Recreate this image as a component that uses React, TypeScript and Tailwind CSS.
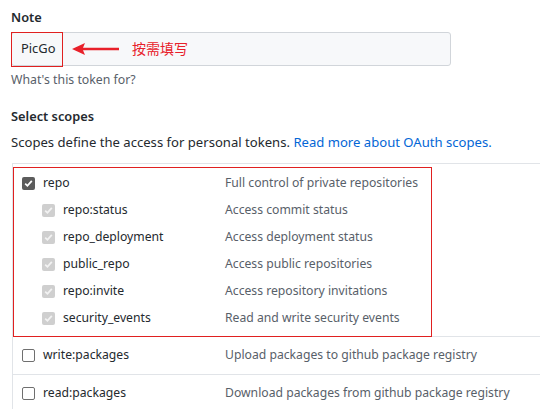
import React from "react";

const font = { fontFamily: '"Segoe UI", "Noto Sans", "Noto Sans CJK SC", sans-serif' };

function Box({ kind }: { kind: "checked" | "sub" | "empty" }) {
  if (kind === "empty") {
    return <span className="block w-[13px] h-[13px] rounded-[2px] border border-[#6f6f6f] bg-white" />;
  }
  const bg = kind === "checked" ? "bg-[#5c5c5c]" : "bg-[#cfcfcf]";
  const stroke = kind === "checked" ? "#ffffff" : "#f2f2f2";
  return (
    <span className={`flex items-center justify-center w-[13px] h-[13px] rounded-[2px] ${bg}`}>
      <svg width="11" height="11" viewBox="0 0 11 11">
        <path d="M2.2 5.6 L4.4 7.8 L8.8 2.8" fill="none" stroke={stroke} strokeWidth="1.8" />
      </svg>
    </span>
  );
}

function Row({ sub, name, desc, kind }: { sub?: boolean; name: string; desc: string; kind: "checked" | "sub" | "empty" }) {
  return (
    <div className="flex items-center h-[27px]">
      <div className={`flex items-center ${sub ? "pl-[29px]" : "pl-[9px]"}`}>
        <Box kind={kind} />
        <span className="ml-[8px] text-[12.2px] text-[#24292e]">{name}</span>
      </div>
      <span className="absolute left-[212px] text-[12.2px] text-[#586069]">{desc}</span>
    </div>
  );
}

export default function App() {
  return (
    <div className="w-[540px] h-[409px] overflow-hidden bg-white relative" style={font}>
      <div className="pl-[11px] pt-[7px]">
        <div className="text-[12.8px] font-semibold text-[#24292e] leading-[20px]">Note</div>
        <div className="relative mt-[5px] w-[440px] h-[34px] rounded-[3px] border border-[#d1d5da] bg-[#f7f8fa] flex items-center">
          <span className="pl-[9px] text-[12.9px] text-[#24292e]">PicGo</span>
          <div className="absolute left-[-1px] top-[-1px] w-[52px] h-[35px] border border-[#e02020]" />
          <svg className="absolute left-[60px] top-[8px]" width="50" height="16" viewBox="0 0 50 16">
            <path d="M0 8 L13 2 L11 6.8 L47 6.8 L47 9.2 L11 9.2 L13 14 Z" fill="#e8202a" />
          </svg>
          <span className="absolute left-[120px] top-[5px] text-[14px] text-[#e8202a]" style={{ fontFamily: '"Noto Sans CJK SC", sans-serif' }}>按需填写</span>
        </div>
        <div className="mt-[4px] text-[12.3px] text-[#586069] leading-[20px]">What's this token for?</div>
        <div className="mt-[16px] text-[12.8px] font-semibold text-[#24292e] leading-[21px]">Select scopes</div>
        <div className="mt-[5px] text-[13.1px] text-[#24292e] leading-[21px]">
          Scopes define the access for personal tokens. <span className="text-[#0366d6]">Read more about OAuth scopes.</span>
        </div>
      </div>
      <div className="ml-[12px] mt-[10px] w-[560px] border-l border-t border-[#e1e4e8]">
        <div className="relative pt-[6px] pb-[4px] border-b border-[#e1e4e8]">
          <div className="absolute left-[0px] top-[3px] w-[419px] h-[170px] border border-[#e02020]" />
          <Row name="repo" desc="Full control of private repositories" kind="checked" />
          <Row sub name="repo:status" desc="Access commit status" kind="sub" />
          <Row sub name="repo_deployment" desc="Access deployment status" kind="sub" />
          <Row sub name="public_repo" desc="Access public repositories" kind="sub" />
          <Row sub name="repo:invite" desc="Access repository invitations" kind="sub" />
          <Row sub name="security_events" desc="Read and write security events" kind="sub" />
        </div>
        <div className="relative h-[38px] flex flex-col justify-center border-b border-[#e1e4e8]">
          <Row name="write:packages" desc="Upload packages to github package registry" kind="empty" />
        </div>
        <div className="relative h-[38px] flex flex-col justify-center border-b border-[#e1e4e8]">
          <Row name="read:packages" desc="Download packages from github package registry" kind="empty" />
        </div>
      </div>
    </div>
  );
}
